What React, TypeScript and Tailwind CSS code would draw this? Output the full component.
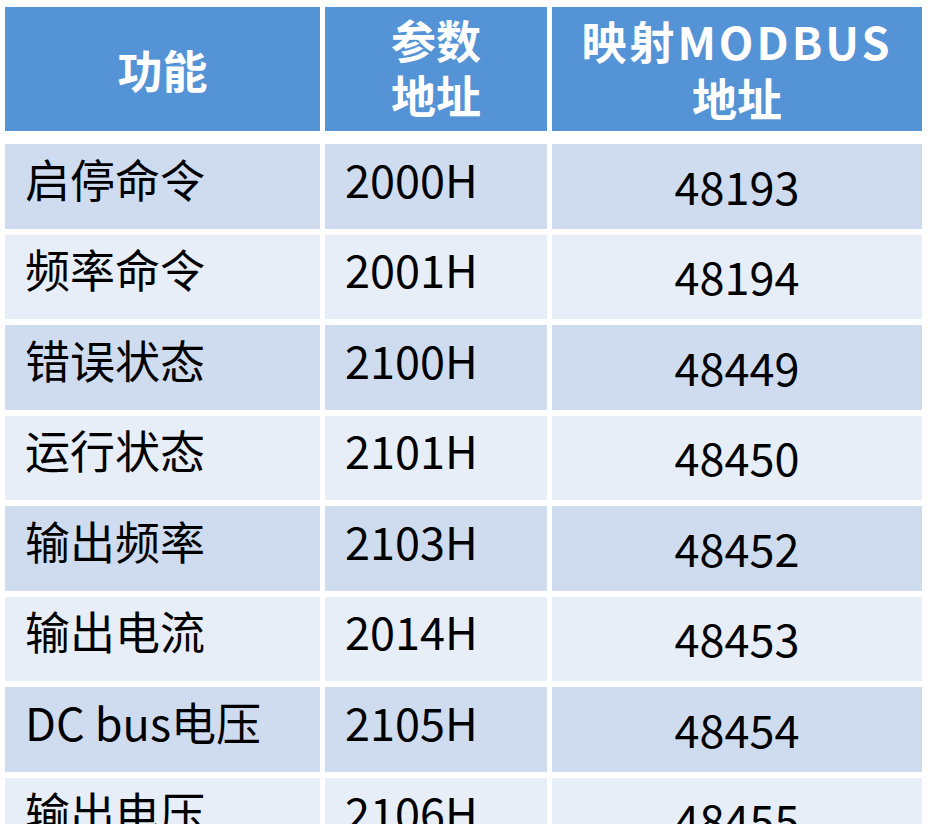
import React from "react";

const rows: [string, string, string][] = [
  ["启停命令", "2000H", "48193"],
  ["频率命令", "2001H", "48194"],
  ["错误状态", "2100H", "48449"],
  ["运行状态", "2101H", "48450"],
  ["输出频率", "2103H", "48452"],
  ["输出电流", "2014H", "48453"],
  ["DC bus电压", "2105H", "48454"],
  ["输出电压", "2106H", "48455"],
];

export default function App() {
  return (
    <div
      className="h-[824px] w-[932px] overflow-hidden bg-white pt-[7px] pl-[5px]"
      style={{ fontFamily: '"Noto Sans CJK SC", "Noto Sans", sans-serif' }}
    >
      <div className="grid grid-cols-[315px_222px_370px] gap-x-[5px]">
        <div className="flex h-[124px] items-center justify-center bg-[#5593d7] text-[45px] font-bold leading-none text-white">
          功能
        </div>
        <div className="flex h-[124px] flex-col items-center justify-start bg-[#5593d7] pt-[5px] text-[45px] font-bold leading-[55px] text-white">
          <span>参数</span>
          <span>地址</span>
        </div>
        <div className="flex h-[124px] flex-col items-center justify-start bg-[#5593d7] pt-[5px] text-[45px] font-bold leading-[57px] text-white">
          <span className="tracking-[3px]">映射MODBUS</span>
          <span>地址</span>
        </div>
      </div>
      <div className="mt-[13px] flex flex-col gap-y-[6px]">
        {rows.map((r, i) => {
          const bg = i % 2 === 0 ? "bg-[#cfdcef]" : "bg-[#e8eef8]";
          return (
            <div key={i} className="grid h-[84.5px] shrink-0 grid-cols-[315px_222px_370px] gap-x-[5px] text-[45px] leading-none text-black">
              <div className={`flex items-center pb-[16px] pl-[20px] ${bg}`}>{r[0]}</div>
              <div className={`flex items-center pb-[16px] pl-[20px] ${bg}`}>{r[1]}</div>
              <div className={`flex items-center justify-center pb-[2px] ${bg}`}>{r[2]}</div>
            </div>
          );
        })}
      </div>
    </div>
  );
}
